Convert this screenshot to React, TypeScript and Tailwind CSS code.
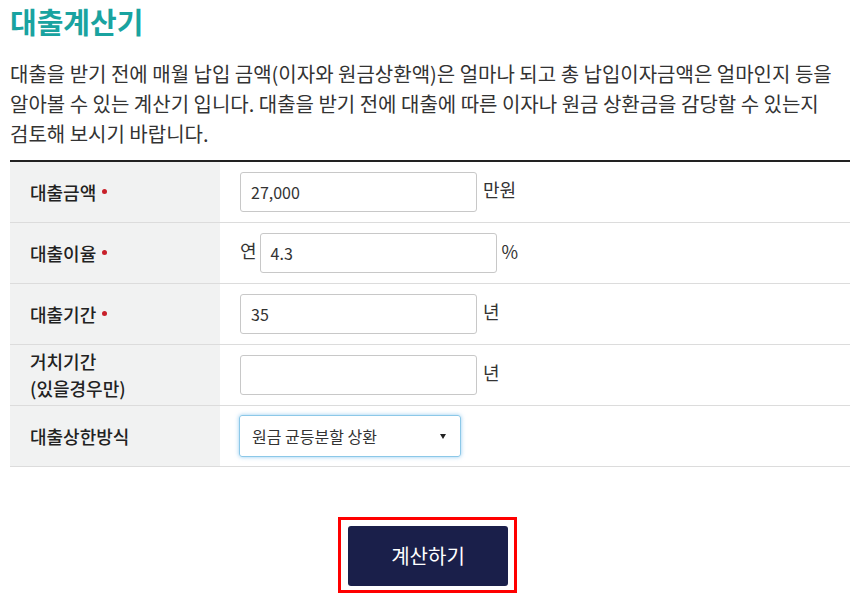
import React from "react";

const font = { fontFamily: '"Noto Sans CJK KR", "Noto Sans", sans-serif' };

function Dot() {
  return <span className="inline-block w-[5px] h-[5px] rounded-full bg-[#c8202a] ml-[6px] align-middle relative top-[-1px]" />;
}

export default function App() {
  return (
    <div style={font} className="w-[850px] h-[598px] bg-white pl-[10px] text-[#222] overflow-hidden">
      <h1 className="text-[29px] font-bold text-[#19a3a0] leading-[38px] pt-[2px]">대출계산기</h1>
      <p className="mt-[19px] text-[20px] leading-[30px] text-[#333] whitespace-nowrap">
        대출을 받기 전에 매월 납입 금액(이자와 원금상환액)은 얼마나 되고 총 납입이자금액은 얼마인지 등을
        <br />
        알아볼 수 있는 계산기 입니다. 대출을 받기 전에 대출에 따른 이자나 원금 상환금을 감당할 수 있는지
        <br />
        검토해 보시기 바랍니다.
      </p>
      <div className="mt-[11px] border-t-2 border-[#222] w-[840px]">
        <div className="flex h-[61px] border-b border-[#dcdcdc]">
          <div className="w-[210px] bg-[#f1f2f2] flex items-center pl-[20px] text-[18px] font-medium">대출금액<Dot /></div>
          <div className="flex items-center pl-[20px]">
            <div className="w-[237px] h-[40px] border border-[#c8c8c8] rounded-[3px] flex items-center px-[10px] text-[16px] text-[#333]">27,000</div>
            <span className="ml-[6px] text-[18px] text-[#333] self-start mt-[14px]">만원</span>
          </div>
        </div>
        <div className="flex h-[61px] border-b border-[#dcdcdc]">
          <div className="w-[210px] bg-[#f1f2f2] flex items-center pl-[20px] text-[18px] font-medium">대출이율<Dot /></div>
          <div className="flex items-center pl-[20px]">
            <span className="text-[18px] text-[#333] mr-[3px] self-start mt-[14px]">연</span>
            <div className="w-[237px] h-[40px] border border-[#c8c8c8] rounded-[3px] flex items-center px-[10px] text-[16px] text-[#333]">4.3</div>
            <span className="ml-[5px] text-[18px] text-[#333] self-start mt-[15px]">%</span>
          </div>
        </div>
        <div className="flex h-[61px] border-b border-[#dcdcdc]">
          <div className="w-[210px] bg-[#f1f2f2] flex items-center pl-[20px] text-[18px] font-medium">대출기간<Dot /></div>
          <div className="flex items-center pl-[20px]">
            <div className="w-[237px] h-[40px] border border-[#c8c8c8] rounded-[3px] flex items-center px-[10px] text-[16px] text-[#333]">35</div>
            <span className="ml-[6px] text-[18px] text-[#333] self-start mt-[14px]">년</span>
          </div>
        </div>
        <div className="flex h-[61px] border-b border-[#dcdcdc]">
          <div className="w-[210px] bg-[#f1f2f2] flex flex-col justify-center pl-[20px] text-[18px] font-medium leading-[27px]">
            <span>거치기간</span>
            <span>(있을경우만)</span>
          </div>
          <div className="flex items-center pl-[20px]">
            <div className="w-[237px] h-[40px] border border-[#c8c8c8] rounded-[3px]" />
            <span className="ml-[6px] text-[18px] text-[#333] self-start mt-[14px]">년</span>
          </div>
        </div>
        <div className="flex h-[61px] border-b border-[#dcdcdc]">
          <div className="w-[210px] bg-[#f1f2f2] flex items-center pl-[20px] text-[18px] font-medium">대출상한방식</div>
          <div className="flex items-center pl-[19px]">
            <div className="w-[222px] h-[42px] border border-[#8cc8e8] rounded-[3px] shadow-[0_0_4px_rgba(80,170,230,0.6)] flex items-center justify-between pl-[12px] pr-[14px] text-[16px] text-[#333]">
              <span>원금 균등분할 상환</span>
              <span className="w-0 h-0 border-l-[3.5px] border-r-[3.5px] border-t-[5px] border-l-transparent border-r-transparent border-t-[#222]" />
            </div>
          </div>
        </div>
      </div>
      <div className="flex w-[840px] mt-[50px] pl-[328px]">
        <div className="border-[3px] border-[#ff0000] pt-[6px] pb-[4px] pl-[7px] pr-[6px]">
          <button className="block w-[160px] h-[60px] bg-[#1a1f4a] rounded-[3px] text-white text-[20px]">계산하기</button>
        </div>
      </div>
    </div>
  );
}
